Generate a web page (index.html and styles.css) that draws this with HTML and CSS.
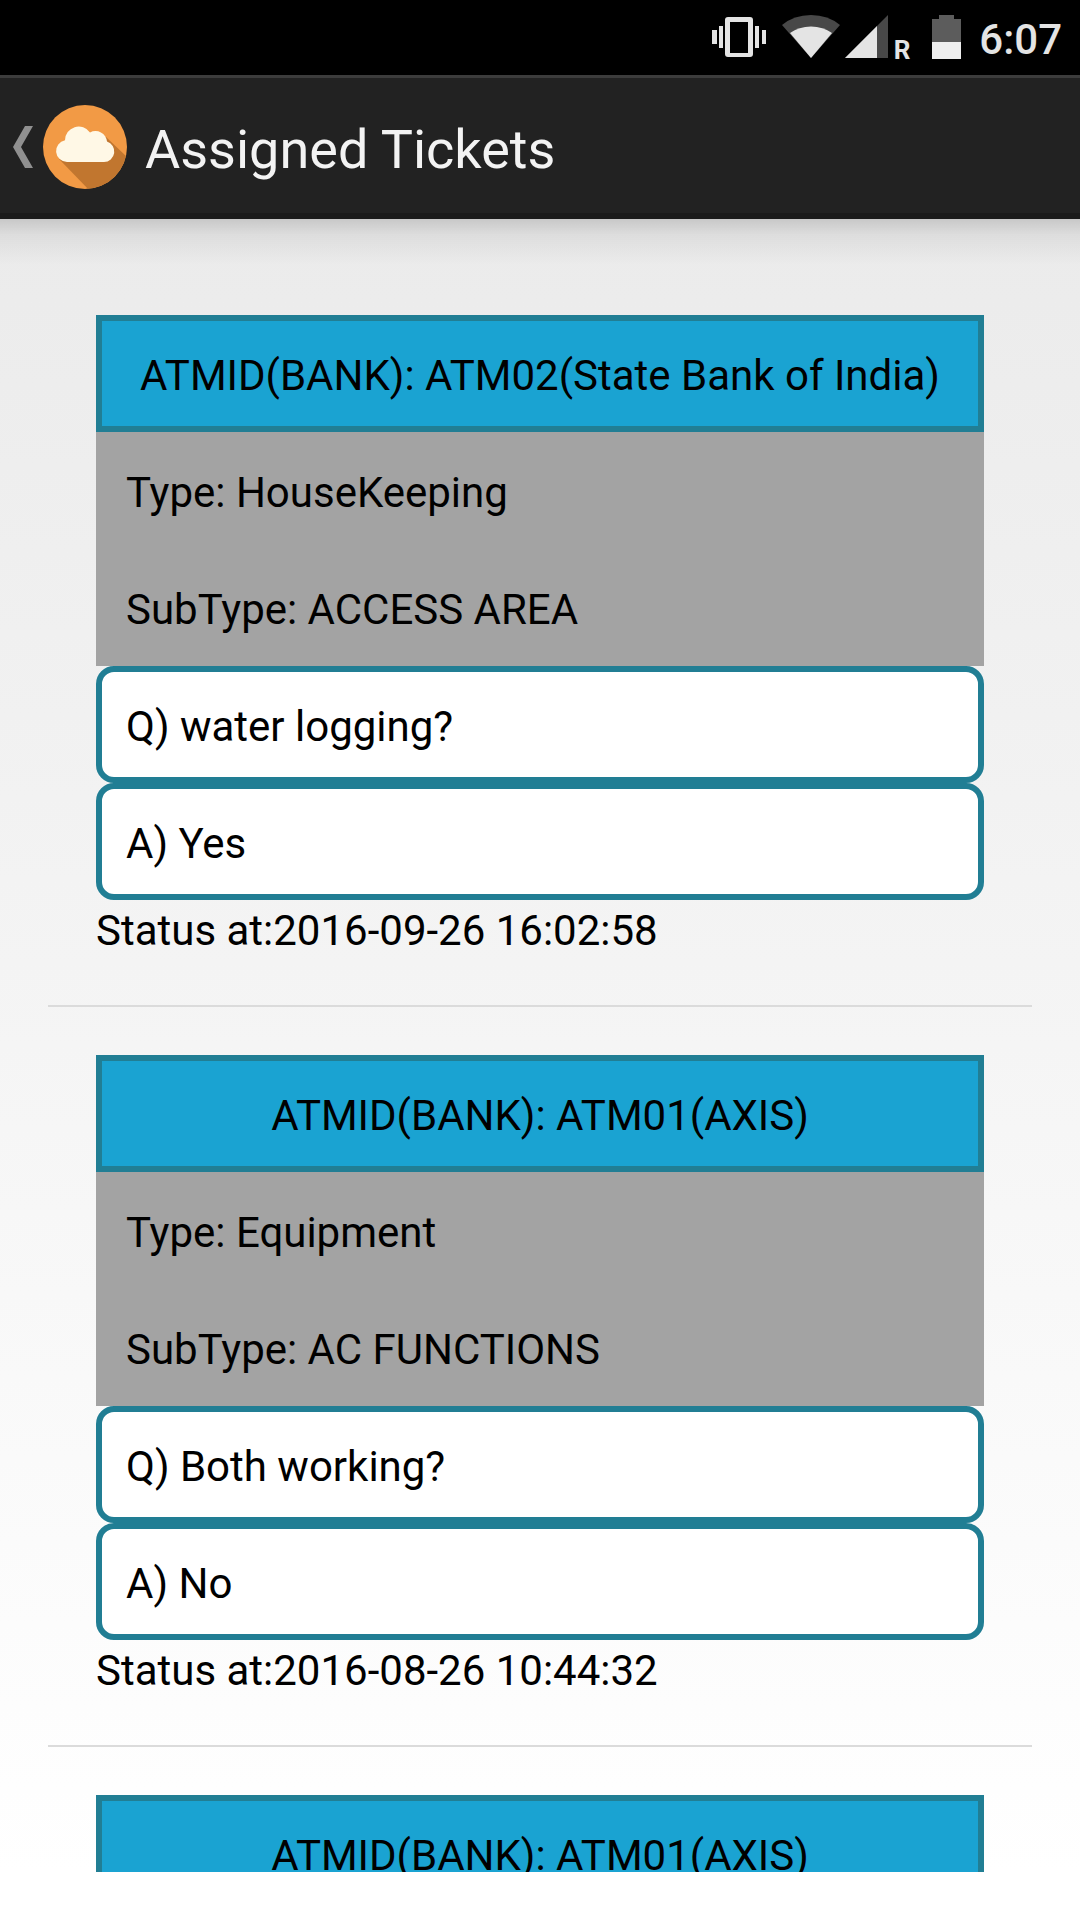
FILE: index.html
```html
<!DOCTYPE html>
<html lang="en">
	<head>
		<meta charset="UTF-8">
		<meta name="viewport" content="width=device-width, initial-scale=1.0">
		<title>Assigned Tickets</title>
		<link rel="stylesheet" href="styles.css">
	</head>
	<body>
		<!-- phone status bar -->
		<div class="statusbar">
			<!-- vibrate -->
			<svg width="70" height="75" viewBox="0 0 70 75" aria-hidden="true">
				<g fill="#e4e4e4">
					<rect x="6" y="30" width="5" height="14"/>
					<rect x="13" y="26" width="4" height="22"/>
					<rect x="49" y="26" width="4" height="22"/>
					<rect x="56" y="30" width="4" height="14"/>
				</g>
				<path d="M22 17h22q3 0 3 3v34q0 3-3 3H22q-3 0-3-3V20q0-3 3-3zM24 22v31h18V22z" fill="#e4e4e4" fill-rule="evenodd"/>
			</svg>
			<!-- wifi -->
			<svg width="66" height="75" viewBox="0 0 66 75" aria-hidden="true">
				<path d="M35 58L6 25Q18 15 35 15T64 25z" fill="#484848"/>
				<path d="M35 58L14 33Q23 26.500 35 26.500T56 33z" fill="#e4e4e4"/>
			</svg>
			<!-- cell signal -->
			<svg width="52" height="75" viewBox="0 0 52 75" aria-hidden="true">
				<path d="M3 58L46 15V58z" fill="#484848"/>
				<path d="M3 58L35 26V58z" fill="#e4e4e4"/>
			</svg>
			<span class="roaming">R</span>
			<!-- battery -->
			<svg width="48" height="75" viewBox="0 0 48 75" aria-hidden="true">
				<path d="M10 19h7v-4h15v4h7v23H10z" fill="#5c5c5c"/>
				<rect x="10" y="42" width="29" height="17" fill="#eee"/>
			</svg>
			<time class="clock">6:07</time>
		</div>

		<!-- title bar -->
		<header class="actionbar">
			<a class="up" href="#" aria-label="Back">
				<svg width="43" height="84" viewBox="0 0 43 84" aria-hidden="true">
					<path d="M25 21h8L21 42l12 21h-8L13 42z" fill="#909090"/>
				</svg>
				<svg width="84" height="84" viewBox="0 0 84 84" aria-hidden="true">
					<clipPath id="disc"><circle cx="42" cy="42" r="42"/></clipPath>
					<circle cx="42" cy="42" r="42" fill="#f29a45"/>
					<path d="M63 32L86 54V86H47L16 54z" fill="#c1762f" clip-path="url(#disc)"/>
					<path d="M24 57a11 11 0 0 1-2-21.800A13.700 13.700 0 0 1 47 27.500A11.500 11.500 0 0 1 64 36.500A10.500 10.500 0 0 1 61 57z" fill="#fff8e6"/>
				</svg>
			</a>
			<h1>Assigned Tickets</h1>
		</header>

		<!-- list of tickets -->
		<main class="screen">
			<ul class="tickets">
				<li class="ticket">
					<h2 class="row bank">ATMID(BANK): ATM02(State Bank of India)</h2>
					<p class="row info">Type: HouseKeeping</p>
					<p class="row info">SubType: ACCESS AREA</p>
					<p class="row box">Q) water logging?</p>
					<p class="row box">A) Yes</p>
					<p class="status">Status at:2016-09-26 16:02:58</p>
				</li>
				<li class="ticket">
					<h2 class="row bank">ATMID(BANK): ATM01(AXIS)</h2>
					<p class="row info">Type: Equipment</p>
					<p class="row info">SubType: AC FUNCTIONS</p>
					<p class="row box">Q) Both working?</p>
					<p class="row box">A) No</p>
					<p class="status">Status at:2016-08-26 10:44:32</p>
				</li>
				<li class="ticket">
					<h2 class="row bank">ATMID(BANK): ATM01(AXIS)</h2>
				</li>
			</ul>
		</main>
	</body>
</html>
```
FILE: styles.css
```css
* {
	box-sizing: border-box;
	margin: 0;
	padding: 0;
}
body {
	display: flex;
	flex-direction: column;
	height: 100vh;
	font-family: Roboto, sans-serif;
	font-size: 42px;
	line-height: 49px;
	color: #000;
	background-color: #fff;
}
svg {
	display: block;
	flex: none;
}

/* status bar */
.statusbar {
	display: flex;
	flex: none;
	justify-content: flex-end;
	align-items: center;
	height: 75px;
	padding-right: 18px;
	background-color: #000;
	color: #e4e4e4;
}
.roaming {
	padding: 24px 12px 0 0;
	font-size: 26px;
	line-height: 30px;
	font-weight: bold;
}
.clock {
	padding: 3px 0 0 9px;
	font-weight: 500;
}

/* action bar */
.actionbar {
	display: flex;
	flex: none;
	align-items: center;
	height: 144px;
	border-top: 3px solid #3c3c3c;
	border-bottom: 6px solid #1b1b1b;
	padding-top: 3px;
	background-color: #222;
	color: #f3f3f3;
}
.up {
	display: flex;
}
h1 {
	padding: 6px 0 0 18px;
	font-size: 54px;
	line-height: 64px;
	font-weight: normal;
}

/* tickets */
.screen {
	flex: 1;
	min-height: 0;
	margin-bottom: 48px;
	padding: 48px 48px 0;
	overflow-y: auto;
	scrollbar-width: none;
	background-image:
		linear-gradient(rgba(0, 0, 0, 0.15), rgba(0, 0, 0, 0.06) 16px, transparent 46px),
		linear-gradient(#ebebeb, #fff);
}
.tickets {
	list-style: none;
}
.ticket {
	padding: 48px;
	border-bottom: 2px solid #dbdbdb;
}
.row {
	padding: 36px 30px 32px;
	font-size: 42px;
	font-weight: normal;
}
.bank, .box {
	padding: 30px 24px 26px;
	border: 6px solid #217e94;
}
.bank {
	background-color: #1aa3d2;
	text-align: center;
}
.info {
	background-color: #a3a3a3;
}
.box {
	background-color: #fff;
	border-radius: 18px;
}
.status {
	padding: 6px 0 2px;
}
```
